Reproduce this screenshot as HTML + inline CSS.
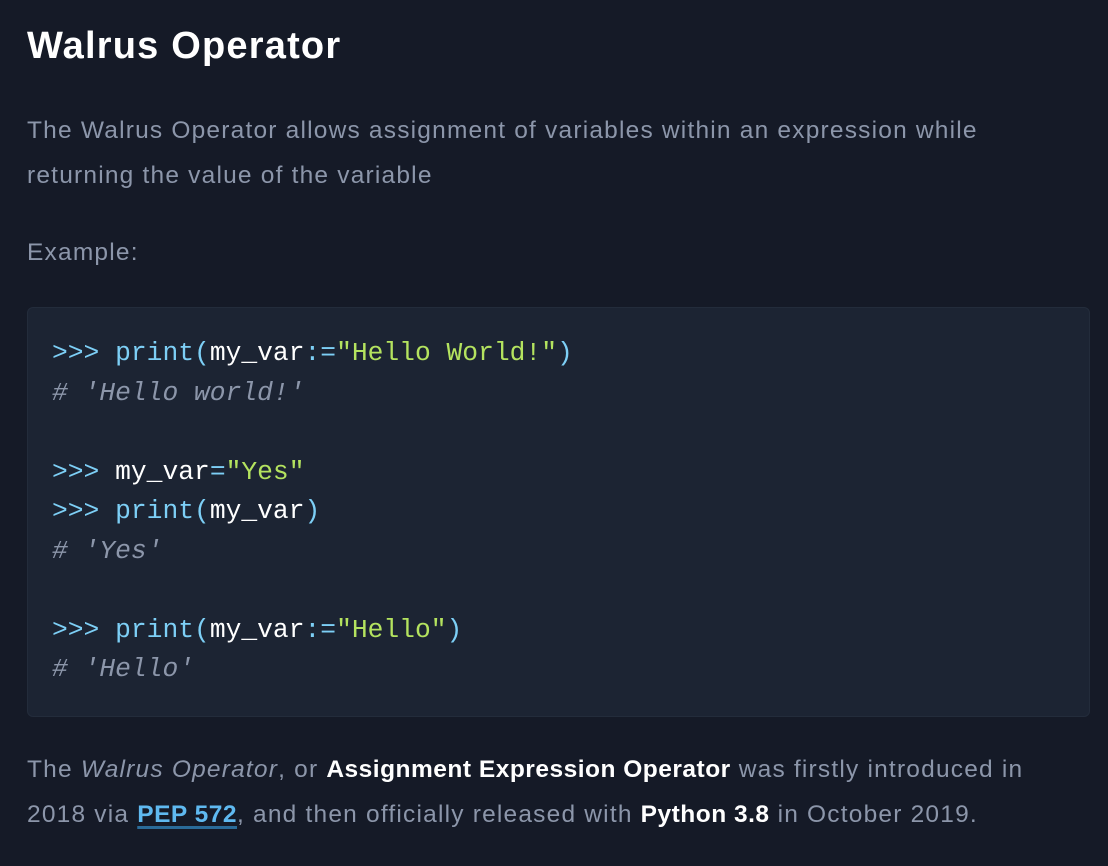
<!DOCTYPE html>
<html><head><meta charset="utf-8"><style>
html,body{margin:0;background:#151a27;width:1108px;height:866px;overflow:hidden}
body{font-family:"Liberation Sans",sans-serif;color:#8c96aa;}
h1{position:absolute;left:27px;top:24px;margin:0;font-size:38px;line-height:44px;color:#fff;font-weight:bold;letter-spacing:1.2px}
p{position:absolute;left:27px;margin:0;font-size:24.5px;line-height:45px;width:1080px;letter-spacing:1.2px;white-space:nowrap}
b{color:#fff;letter-spacing:0.5px}
a{color:#5fb9f0;font-weight:bold;letter-spacing:0.5px;text-decoration:underline;text-decoration-color:#2a6b99;text-decoration-thickness:3px;text-underline-offset:4px}
.code{position:absolute;left:27px;top:307px;width:1063px;height:410px;background:#1c2433;border:1px solid #232c3b;border-radius:6px;box-sizing:border-box}
pre{margin:0;position:absolute;left:24px;top:26px;font-family:"Liberation Mono",monospace;font-size:26.3px;line-height:39.5px;color:#fff}
.p{color:#7dcff6}.s{color:#b4e35f}.c{color:#8c96aa;font-style:italic}
</style></head><body>
<h1>Walrus Operator</h1>
<p style="top:108px">The Walrus Operator allows assignment of variables within an expression while<br>returning the value of the variable</p>
<p style="top:230px">Example:</p>
<div class="code"><pre><span class="p">&gt;&gt;&gt; print(</span>my_var<span class="p">:=</span><span class="s">"Hello World!"</span><span class="p">)</span>
<span class="c"># 'Hello world!'</span>

<span class="p">&gt;&gt;&gt; </span>my_var<span class="p">=</span><span class="s">"Yes"</span>
<span class="p">&gt;&gt;&gt; print(</span>my_var<span class="p">)</span>
<span class="c"># 'Yes'</span>

<span class="p">&gt;&gt;&gt; print(</span>my_var<span class="p">:=</span><span class="s">"Hello"</span><span class="p">)</span>
<span class="c"># 'Hello'</span></pre></div>
<p style="top:747px">The <i>Walrus Operator</i>, or <b>Assignment Expression Operator</b> was firstly introduced in<br>2018 via <a>PEP 572</a>, and then officially released with <b>Python 3.8</b> in October 2019.</p>
</body></html>
